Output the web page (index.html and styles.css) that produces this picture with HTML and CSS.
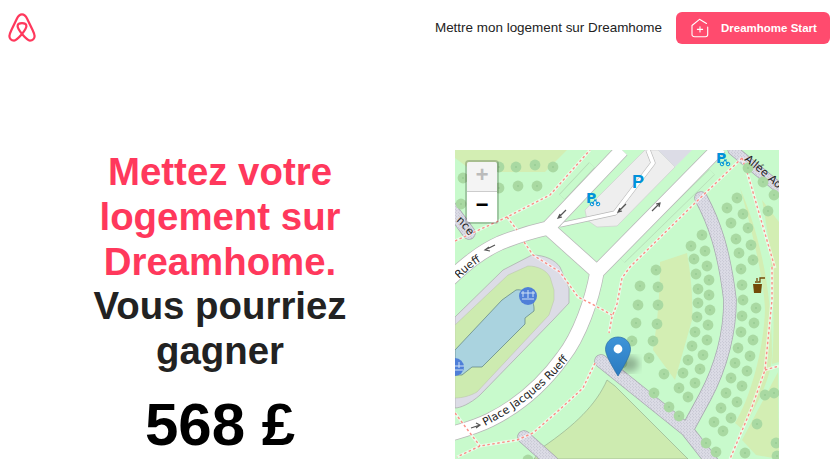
FILE: index.html
```html
<!DOCTYPE html>
<html lang="fr">
<head>
<meta charset="utf-8">
<title>Dreamhome</title>
<link rel="stylesheet" href="styles.css">
</head>
<body>
<header class="topbar">
  <a class="logo" href="#" aria-label="Dreamhome">
    <svg width="28" height="30" viewBox="0 0 30 32" fill="none" stroke="#ff385c" stroke-width="2.400" stroke-linejoin="round" stroke-linecap="round">
      <path d="M15 22.500C12.500 19 10.300 16 10.300 14C10.300 11.800 12.400 10.800 15 10.800C17.600 10.800 19.700 11.800 19.700 14C19.700 16 17.500 19 15 22.500C12 26 9 29.500 6.500 29.500C3.500 29.500 1.500 27.300 1.500 24.600C1.500 22.800 2.500 20.500 3.800 17.800L9.500 6C11 3 12.500 1.500 15 1.500C17.500 1.500 19 3 20.500 6L26.200 17.800C27.500 20.500 28.500 22.800 28.500 24.600C28.500 27.300 26.500 29.500 23.500 29.500C21 29.500 18 26 15 22.500Z"/>
    </svg>
  </a>
  <nav class="actions">
    <a class="host-link" href="#">Mettre mon logement sur Dreamhome</a>
    <a class="start-btn" href="#">
      <svg class="start-icon" width="20" height="20" viewBox="0 0 20 20" fill="none" stroke="#fff" stroke-width="1.100" stroke-linecap="round" stroke-linejoin="round">
        <path d="M2 7.500L9.500 1.300L16.500 5.500M17.700 9V16.500C17.700 18 16.800 18.700 15.500 18.700H4.500C3.200 18.700 2 18 2 16.500V7.500"/>
        <path d="M10 8.800V14M7.400 11.400H12.600"/>
      </svg>
      <span>Dreamhome Start</span>
    </a>
  </nav>
</header>

<main class="hero">
  <section class="pitch">
    <h1 class="headline"><span class="accent">Mettez votre logement sur Dreamhome.</span> Vous pourriez gagner</h1>
    <p class="price">568 £</p>
  </section>
  <div class="map">
    <svg class="map-canvas" width="324" height="309" viewBox="455 150 324 309">
      <defs>
        <g id="t"><circle r="5.400" class="tree"/><circle r=".8" class="tree-dot"/></g>
        <pattern id="dots" width="3" height="3" patternUnits="userSpaceOnUse">
          <rect width="3" height="3" fill="#dcdce6"/>
          <circle cx=".8" cy=".8" r=".38" fill="#8a8a9e"/>
          <circle cx="2.300" cy="2.200" r=".34" fill="#9a9aac"/>
        </pattern>
        <linearGradient id="pin" x1="0" y1="0" x2="0" y2="1">
          <stop offset="0" stop-color="#3f94d8"/>
          <stop offset="1" stop-color="#2a7ac0"/>
        </linearGradient>
        <filter id="blur"><feGaussianBlur stdDeviation="3.500"/></filter>
        <path id="lab1" d="M485 426C515 411 546 387 568 360L600 320"/>
        <path id="lab2" d="M459 279C466 272 474 265 488 257L500 250"/>
        <path id="lab3" d="M456 221C460 224 465 230 470 238L480 250"/>
        <path id="lab4" d="M744 160C755 169 768 180 784 194L806 214"/>
        <g id="footways">
          <path d="M455 241L507 217L550 195L590 150"/>
          <path d="M507 217L517 230"/>
          <path d="M524 242L533 255L560 272L578 297L592 304L612 315"/>
          <path d="M742 158L695 203L630 267L622 278L617 304L612 317L609 333"/>
          <path d="M595 363L583 388L557 412L533 433L517 440L480 446L457 457"/>
          <path d="M455 413L470 433L480 446"/>
          <path d="M742 158L748 175L775 268M772 267L772 300L765 370L752 407L730 459M765 370L779 366"/>
        </g>
      </defs>

      <rect class="park" x="455" y="150" width="324" height="309"/>

      <!-- meadows -->
      <path class="grass" d="M455 150H567L545 172H474L455 158Z"/>
      <path class="grass" d="M660 262L687 253C692 280 693 305 692 320L675 380L653 350C658 320 660 290 660 262Z"/>
      <path class="grass" d="M740 188C752 230 764 280 765 310C764 345 752 395 735 423L742 429C758 405 772 375 772 355C772 290 760 235 740 188Z"/>
      <path class="grass" d="M762 200L779 222V362L772 364C776 310 772 250 762 200Z"/>
      <path class="grass" d="M778 372L742 440L756 455L779 459Z"/>
      <path class="grass-line" d="M607 380C596 405 575 425 543 447L534 459H688L615 386Z"/>

      <!-- basin -->
      <path class="plaza" d="M455 317L503 270L532 255C545 255 555 260 560 267L569 288V303L553 320L480 395C470 404 460 408 455 408Z"/>
      <path class="lawn" d="M455 325L508 275L528 266C538 266 546 270 550 277L554 290V300L549 315L477 392C470 396 462 398 455 398Z"/>
      <path class="water" d="M455 350L502 300L516 290C526 288 535 300 534 311L525 318V324L482 367H472L462 375H455Z"/>

      <!-- parking -->
      <path class="parking" d="M585 210L612 183L645 150H658L675 167L617 226L597 227L587 220Z"/>
      <path class="building" d="M658 150H692L675 167Z"/>
      <path class="road-case thin" d="M560 225L615 213L653 163L648 150"/>
      <path class="road-fill thin" d="M560 225L615 213L653 163L648 150"/>
      <path class="strip-edge" d="M622 260L712 172"/>
      <path class="strip-fill" d="M622 260L712 172"/>
      <path class="strip-edge" d="M562 197L592 165"/>
      <path class="strip-fill" d="M562 197L592 165"/>

      <!-- pedestrian ways -->
      <path class="ped-case" d="M701 198C714 222 724 250 730 300C730 330 722 365 705 397L687 430"/>
      <path class="ped-case" d="M601 361L687 430L712 462"/>
      <path class="ped-case" d="M524 437L552 462"/>
      <path class="ped-case small" d="M733 150L784 192"/>
      <path class="ped-case" d="M450 207L469 233"/>
      <path class="ped-fill" d="M701 198C714 222 724 250 730 300C730 330 722 365 705 397L687 430"/>
      <path class="ped-fill" d="M601 361L687 430L712 462"/>
      <path class="ped-fill" d="M524 437L552 462"/>
      <path class="ped-fill small" d="M733 150L784 192"/>
      <path class="ped-fill" d="M450 207L469 233"/>

      <!-- roads -->
      <path class="road-case" d="M450 279C465 265 480 252 500 243C515 237 530 232 548 228L622 150M548 228L597 272C592 300 580 335 563 357C545 382 520 405 490 420C478 426 465 430 450 434M597 272L720 147"/>
      <path class="road-fill" d="M450 279C465 265 480 252 500 243C515 237 530 232 548 228L622 150M548 228L597 272C592 300 580 335 563 357C545 382 520 405 490 420C478 426 465 430 450 434M597 272L720 147"/>

      <!-- footways -->
      <use class="foot-case" href="#footways"/>
      <use class="foot" href="#footways"/>

      <!-- trees -->
      <g>
        <use href="#t" x="499" y="167"/><use href="#t" x="516" y="167"/><use href="#t" x="535" y="165"/><use href="#t" x="553" y="167"/><use href="#t" x="463" y="178"/><use href="#t" x="499" y="188"/><use href="#t" x="518" y="186"/><use href="#t" x="537" y="186"/><use href="#t" x="461" y="204"/>
        <use href="#t" x="748" y="168"/><use href="#t" x="763" y="182"/><use href="#t" x="774" y="195"/><use href="#t" x="737" y="198"/><use href="#t" x="727" y="208"/><use href="#t" x="743" y="214"/><use href="#t" x="768" y="211"/><use href="#t" x="731" y="223"/><use href="#t" x="748" y="228"/><use href="#t" x="702" y="235"/><use href="#t" x="691" y="246"/><use href="#t" x="705" y="251"/><use href="#t" x="736" y="239"/><use href="#t" x="751" y="245"/><use href="#t" x="694" y="259"/><use href="#t" x="707" y="266"/><use href="#t" x="739" y="253"/><use href="#t" x="753" y="260"/><use href="#t" x="656" y="270"/><use href="#t" x="696" y="274"/><use href="#t" x="709" y="280"/><use href="#t" x="741" y="269"/><use href="#t" x="640" y="286"/><use href="#t" x="658" y="287"/><use href="#t" x="698" y="289"/><use href="#t" x="709" y="295"/><use href="#t" x="742" y="285"/>
        <use href="#t" x="638" y="305"/><use href="#t" x="658" y="305"/><use href="#t" x="698" y="303"/><use href="#t" x="710" y="310"/><use href="#t" x="743" y="300"/><use href="#t" x="756" y="308"/><use href="#t" x="636" y="323"/><use href="#t" x="657" y="324"/><use href="#t" x="697" y="317"/><use href="#t" x="708" y="325"/><use href="#t" x="742" y="316"/><use href="#t" x="754" y="323"/><use href="#t" x="632" y="341"/><use href="#t" x="653" y="341"/><use href="#t" x="695" y="332"/><use href="#t" x="707" y="340"/><use href="#t" x="741" y="332"/><use href="#t" x="753" y="340"/><use href="#t" x="649" y="358"/><use href="#t" x="692" y="346"/><use href="#t" x="703" y="355"/><use href="#t" x="738" y="348"/><use href="#t" x="750" y="356"/><use href="#t" x="622" y="363"/><use href="#t" x="688" y="360"/><use href="#t" x="700" y="369"/><use href="#t" x="735" y="363"/><use href="#t" x="747" y="371"/><use href="#t" x="664" y="374"/><use href="#t" x="683" y="373"/><use href="#t" x="695" y="383"/><use href="#t" x="731" y="378"/><use href="#t" x="742" y="386"/><use href="#t" x="679" y="388"/><use href="#t" x="688" y="397"/><use href="#t" x="726" y="393"/><use href="#t" x="737" y="402"/><use href="#t" x="765" y="395"/><use href="#t" x="774" y="393"/><use href="#t" x="654" y="393"/><use href="#t" x="669" y="407"/><use href="#t" x="679" y="416"/><use href="#t" x="721" y="408"/><use href="#t" x="731" y="418"/><use href="#t" x="714" y="422"/><use href="#t" x="723" y="431"/><use href="#t" x="757" y="424"/><use href="#t" x="706" y="443"/><use href="#t" x="716" y="452"/><use href="#t" x="745" y="453"/><use href="#t" x="776" y="443"/><use href="#t" x="777" y="456"/><use href="#t" x="528" y="460"/>
      </g>

      <!-- road labels -->
      <text class="label"><textPath href="#lab1">Place Jacques Rueff</textPath></text>
      <text class="label"><textPath href="#lab2">Rueff</textPath></text>
      <text class="label"><textPath href="#lab3">nce</textPath></text>
      <text class="label"><textPath href="#lab4">Allée Ao</textPath></text>

      <!-- one-way arrows -->
      <g class="arrow">
        <path d="M495 245L485 250M489 247L485 250L490 251"/>
        <path d="M566 210L558 218M560 214L558 218L562 217"/>
        <path d="M626 204L618 212M620 208L618 212L622 211"/>
        <path d="M652 211L660 203M656 204L660 203L659 207"/>
        <path d="M471 428L480 425M476 423L480 425L476 428"/>
      </g>

      <!-- parking symbols -->
      <text class="p-sign" x="632" y="188">P</text>
      <text class="p-sign small" x="586" y="203">P</text>
      <text class="p-sign small" x="716" y="163">P</text>
      <g class="bike">
        <circle cx="592" cy="204" r="1.800"/><circle cx="598" cy="204" r="1.800"/><path d="M592 204L595 200L598 204M594 200H597"/>
        <circle cx="722" cy="164" r="1.800"/><circle cx="728" cy="164" r="1.800"/><path d="M722 164L725 160L728 164M724 160H727"/>
      </g>

      <!-- fountains -->
      <path class="fountain-bg" d="M528 287A9 9 0 0 1 537 296A9 9 0 0 1 519 296A9 9 0 0 1 528 287Z"/>
      <path class="fountain-line" d="M523 291V297M528 290V298M533 291V297M521 293H535M522 299H534"/>
      <path class="fountain-bg" d="M455 358A9 9 0 0 1 464 367A9 9 0 0 1 455 376Z"/>
      <path class="fountain-line" d="M459 362V368M455 366H464M455 370H463"/>

      <!-- drinking water -->
      <path class="tap" d="M755 282H760V278H765M757 278V281"/>
      <path class="cup" d="M753 284H762L761 293H754Z"/>

      <!-- marker -->
      <ellipse class="marker-shadow" cx="628" cy="364" rx="11" ry="8"/>
      <path class="marker-body" d="M618 337C610.500 337 605.500 342.500 605.500 349.500C605.500 355 612 366 618 376C624 366 630.500 355 630.500 349.500C630.500 342.500 625.500 337 618 337Z"/>
      <circle class="marker-hole" cx="618" cy="349" r="4.400"/>
    </svg>
    <div class="zoom">
      <button class="zoom-btn disabled" type="button">+</button>
      <button class="zoom-btn" type="button">−</button>
    </div>
  </div>
</main>
</body>
</html>
```
FILE: styles.css
```css
* { box-sizing: border-box; }
html, body { margin: 0; height: 100%; overflow: hidden; background: #fff; }
body { font-family: "Liberation Sans", Arial, sans-serif; color: #222; }
a { text-decoration: none; color: inherit; }

.topbar { display: flex; justify-content: space-between; align-items: center; padding: 12px 8px; height: 56px; }
.logo { display: block; width: 28px; height: 30px; }
.logo svg { display: block; }
.actions { display: flex; align-items: center; gap: 14px; }
.host-link { font-size: 13.440px; color: #222; line-height: 32px; }
.start-btn { display: flex; align-items: center; width: 154px; height: 32px; padding-left: 14px; gap: 11px; background: #ff4b6e; border-radius: 6px; color: #fff; font-size: 11.500px; font-weight: 700; }
.start-icon { display: block; flex: none; }

.hero { display: flex; align-items: flex-start; margin-top: 94px; }
.pitch { width: 440px; flex: none; text-align: center; padding: 0 70px; }
.headline { margin: 0; font-size: 38.400px; line-height: 44.800px; font-weight: 700; color: #222; }
.accent { color: #ff385c; }
.price { margin: 19px 0 0; font-size: 60px; line-height: 64px; font-weight: 700; color: #000; white-space: nowrap; }

.map { position: relative; width: 324px; height: 309px; margin-left: 15px; flex: none; overflow: hidden; }
.map-canvas { display: block; }
.park { fill: #c8facc; }
.grass { fill: #d3eeb3; }
.grass-line { fill: #cdebb0; stroke: #8fa68a; stroke-width: .6; }
.plaza { fill: #dcdce6; stroke: #a9a9a9; stroke-width: .7; }
.lawn { fill: #cdebb0; stroke: #b8c0a8; stroke-width: .5; }
.water { fill: #aad3df; stroke: #5d7f80; stroke-width: .7; }
.parking { fill: #eeeeee; stroke: #cfcfcf; stroke-width: .7; }
.building { fill: #dcdce6; }
.strip-edge, .strip-fill { fill: none; }
.strip-edge { stroke: #b4d8b4; stroke-width: 8; }
.strip-fill { stroke: #c8facc; stroke-width: 6.800; }
.road-case, .road-fill { fill: none; stroke-linejoin: round; }
.road-case { stroke: #b8b8b8; stroke-width: 15; }
.road-fill { stroke: #fff; stroke-width: 13.500; }
.road-case.thin { stroke-width: 5; }
.road-fill.thin { stroke-width: 3.800; }
.ped-case, .ped-fill { fill: none; stroke-linecap: round; }
.ped-case { stroke: #a8a8b0; stroke-width: 13.500; }
.ped-fill { stroke: url(#dots); stroke-width: 12; }
.ped-case.small { stroke-width: 11; }
.ped-fill.small { stroke-width: 9.500; }
.foot-case { fill: none; stroke: #fff; stroke-width: 3; opacity: .6; }
.foot { fill: none; stroke: #fb8f86; stroke-width: 1.400; stroke-dasharray: 2.500 2.500; }
.tree { fill: #a9d9a2; }
.tree-dot { fill: #8cc288; }
.label { font-family: "DejaVu Sans", sans-serif; font-size: 11px; fill: #222; }
.arrow path { fill: none; stroke: #555; stroke-width: 1.200; }
.p-sign { font-family: "Liberation Sans", sans-serif; font-weight: 700; font-size: 18px; fill: #0092da; }
.p-sign.small { font-family: "DejaVu Sans", sans-serif; font-size: 14px; }
.bike circle, .bike path { fill: none; stroke: #0092da; stroke-width: 1; }
.fountain-bg { fill: #4f7fd8; }
.fountain-line { fill: none; stroke: #cfe2f5; stroke-width: 1; }
.tap { fill: none; stroke: #734a08; stroke-width: 1.300; }
.cup { fill: #734a08; }
.marker-shadow { fill: #000; opacity: .28; filter: url(#blur); }
.marker-body { fill: url(#pin); stroke: #2a6da4; stroke-width: .7; }
.marker-hole { fill: #fff; }

.zoom { position: absolute; left: 10px; top: 10px; width: 34px; border: 2px solid rgba(0, 0, 0, .2); border-radius: 4px; background-clip: padding-box; }
.zoom-btn { display: block; width: 30px; height: 30px; padding: 0; border: 0; background: #fff; font-family: "Liberation Mono", monospace; font-weight: 700; font-size: 22px; line-height: 30px; color: #000; text-align: center; }
.zoom-btn:first-child { border-bottom: 1px solid #ccc; border-radius: 2px 2px 0 0; }
.zoom-btn:last-child { border-radius: 0 0 2px 2px; }
.zoom-btn.disabled { background: #f4f4f4; color: #bbb; }
```
